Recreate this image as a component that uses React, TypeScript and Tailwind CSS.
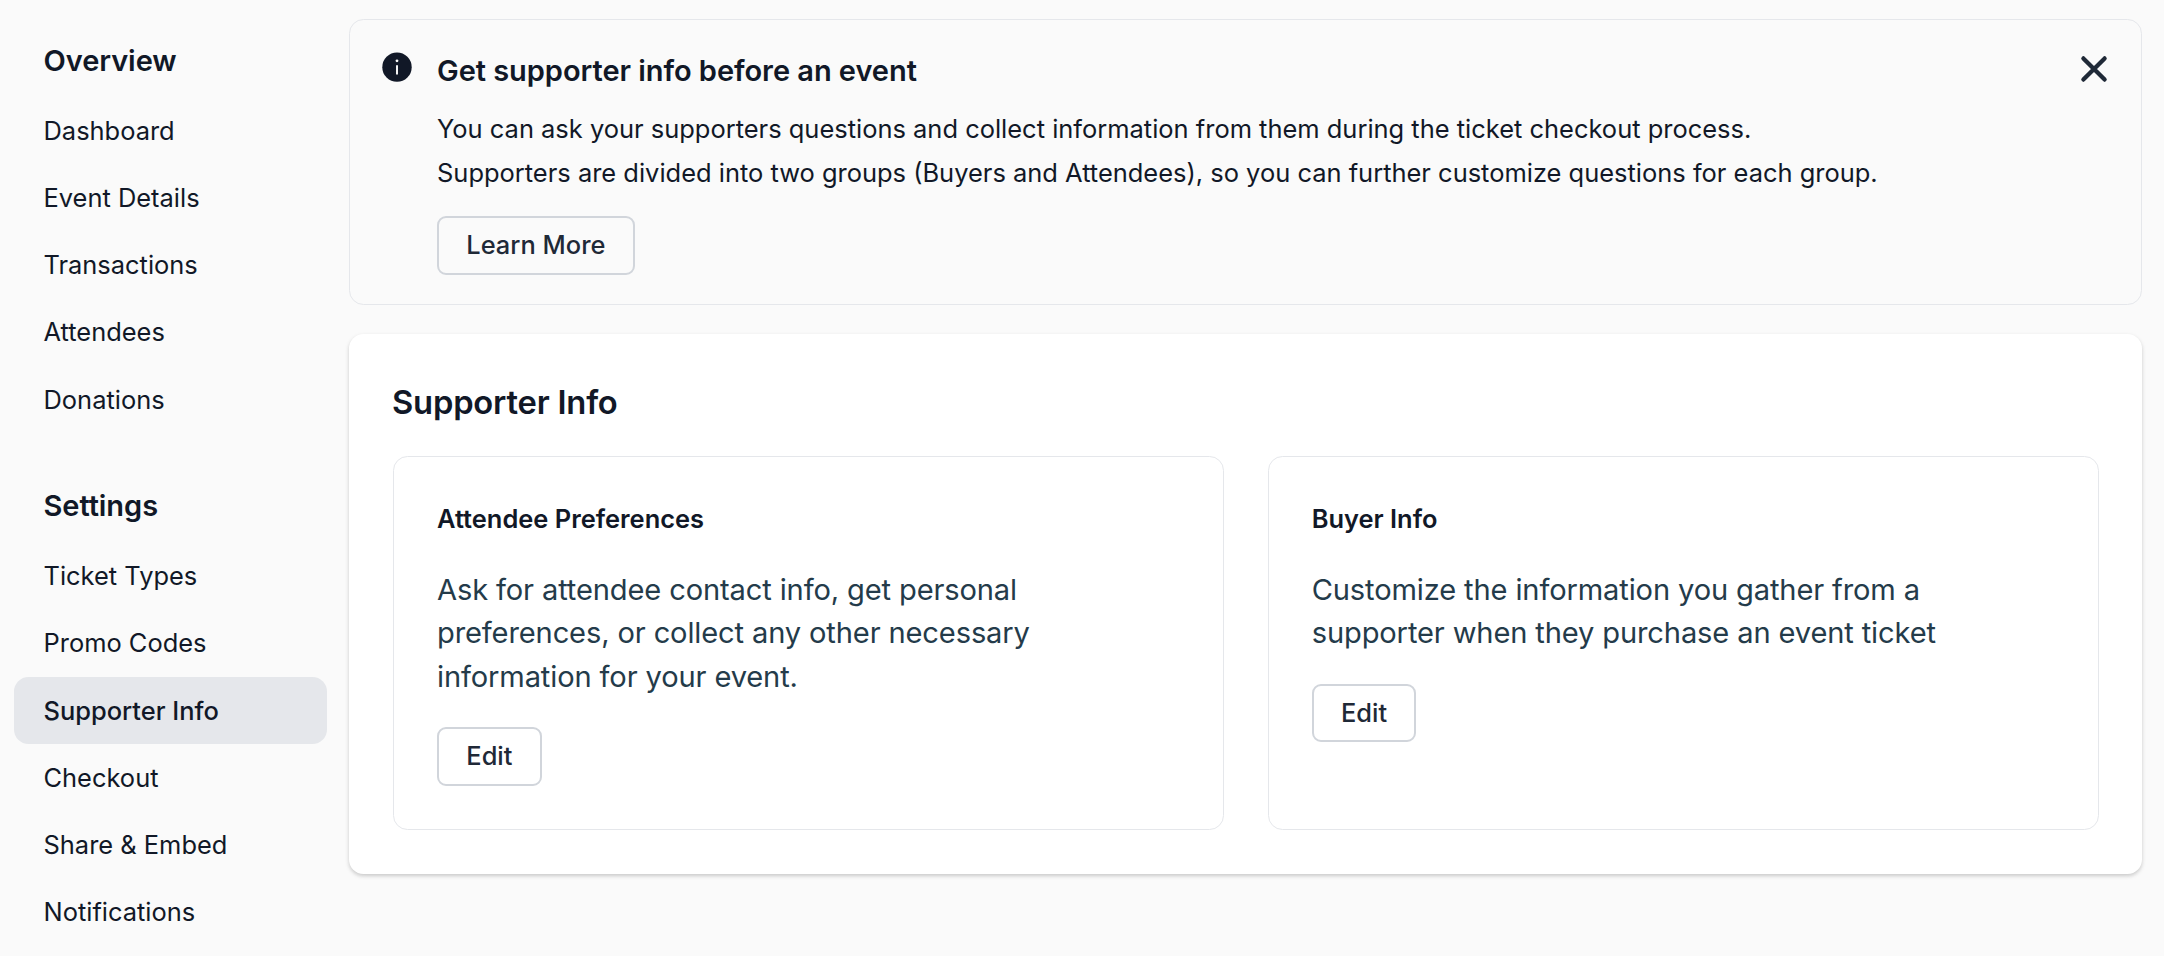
import { useState } from "react";

const overviewItems = ["Dashboard", "Event Details", "Transactions", "Attendees", "Donations"];

const settingsItems = [
  "Ticket Types",
  "Promo Codes",
  "Supporter Info",
  "Checkout",
  "Share & Embed",
  "Notifications",
];

const cards = [
  {
    title: "Attendee Preferences",
    lines: [
      "Ask for attendee contact info, get personal",
      "preferences, or collect any other necessary",
      "information for your event.",
    ],
  },
  {
    title: "Buyer Info",
    lines: [
      "Customize the information you gather from a",
      "supporter when they purchase an event ticket",
    ],
  },
];

function NavSection({ title, items, active, onSelect }: {
  title: string;
  items: string[];
  active: string;
  onSelect: (name: string) => void;
}) {
  return (
    <div>
      <h2 className="px-[29.5px] text-[29px] leading-[44px] font-semibold tracking-[-0.06px]">{title}</h2>
      <ul className="mt-[14.3px]">
        {items.map((item) => (
          <li key={item}>
            <button
              onClick={() => onSelect(item)}
              className={`block h-[67.2px] w-full rounded-[14.5px] px-[29.5px] text-left text-[25.45px] leading-[36px]
              ${item === active ? "bg-gray-200 font-medium" : ""}`}
            >
              {item}
            </button>
          </li>
        ))}
      </ul>
    </div>
  );
}

function OutlineButton({ label }: { label: string }) {
  return (
    <button className="h-[58.5px] rounded-[9px] border-2 border-[#d1d5db] px-[27.3px] text-[25.45px] font-medium whitespace-nowrap text-[#1f2937]">
      {label}
    </button>
  );
}

export default function App() {
  const [active, setActive] = useState("Supporter Info");
  const [showBanner, setShowBanner] = useState(true);

  return (
    <div className="flex h-[956px] w-[2164px] gap-[22px] overflow-hidden bg-[#fafafa] pr-[22px] pl-[14px] font-[Inter,sans-serif] text-[#111827]">
      {/* Sidebar */}
      <nav className="flex w-[313px] shrink-0 flex-col gap-[51px] pt-[39px]">
        <NavSection title="Overview" items={overviewItems} active={active} onSelect={setActive} />
        <NavSection title="Settings" items={settingsItems} active={active} onSelect={setActive} />
      </nav>

      <main className="flex min-w-0 flex-1 flex-col gap-[29px] pt-[19px]">
        {/* Info banner */}
        {showBanner && (
          <section className="flex h-[286px] shrink-0 items-start rounded-[14.5px] border border-[#e5e7eb] p-[29px]">
            <svg viewBox="0 0 24 24" className="size-9 shrink-0">
              <circle cx="12" cy="12.1" r="9.8" fill="#111827" />
              <path d="M12 10.9v6.1" stroke="#fafafa" strokeWidth="1.3" />
              <circle cx="12" cy="7.9" r="0.95" fill="#fafafa" />
            </svg>
            <div className="ml-[22px] flex-1">
              <h3 className="text-[29px] leading-[44px] font-semibold tracking-[-0.05px]">
                Get supporter info before an event
              </h3>
              <p className="mt-[14px] mb-[21px] text-[25.46px] leading-[44px]">
                You can ask your supporters questions and collect information from them during the ticket checkout process.
                <br />
                Supporters are divided into two groups (Buyers and Attendees), so you can further customize questions for each group.
              </p>
              <OutlineButton label="Learn More" />
            </div>
            <button aria-label="Close" onClick={() => setShowBanner(false)} className="mt-0.5">
              <svg viewBox="0 0 36 36" className="size-9" fill="none" stroke="#1f2937" strokeWidth="4.3" strokeLinecap="round">
                <path d="M7.4 7.4l21.2 21.2M28.6 7.4L7.4 28.6" />
              </svg>
            </button>
          </section>
        )}

        {/* Supporter info */}
        <section className="h-[540px] shrink-0 rounded-[14.5px] bg-white pt-[43px] pr-[43px] pl-[44px] shadow-[0_2px_5.5px_rgba(0,0,0,0.1),0_2px_3.6px_rgba(0,0,0,0.1)]">
          <h1 className="-ml-px text-[32.73px] leading-[50px] font-semibold tracking-[-0.2px]">Supporter Info</h1>
          <div className="mt-[29px] grid h-[374px] grid-cols-2 gap-[43.4px]">
            {cards.map((card) => (
              <div key={card.title} className="rounded-[14.5px] border border-[#e5e7eb] p-[43px]">
                <h4 className="text-[25.45px] leading-[38px] font-semibold">{card.title}</h4>
                <p className="mt-[29.5px] mb-[28.9px] text-[29.09px] leading-[43.64px] tracking-[-0.13px] text-[#243b4a]">
                  {card.lines.map((line) => (
                    <span key={line} className="block whitespace-nowrap">{line}</span>
                  ))}
                </p>
                <OutlineButton label="Edit" />
              </div>
            ))}
          </div>
        </section>
      </main>
    </div>
  );
}
